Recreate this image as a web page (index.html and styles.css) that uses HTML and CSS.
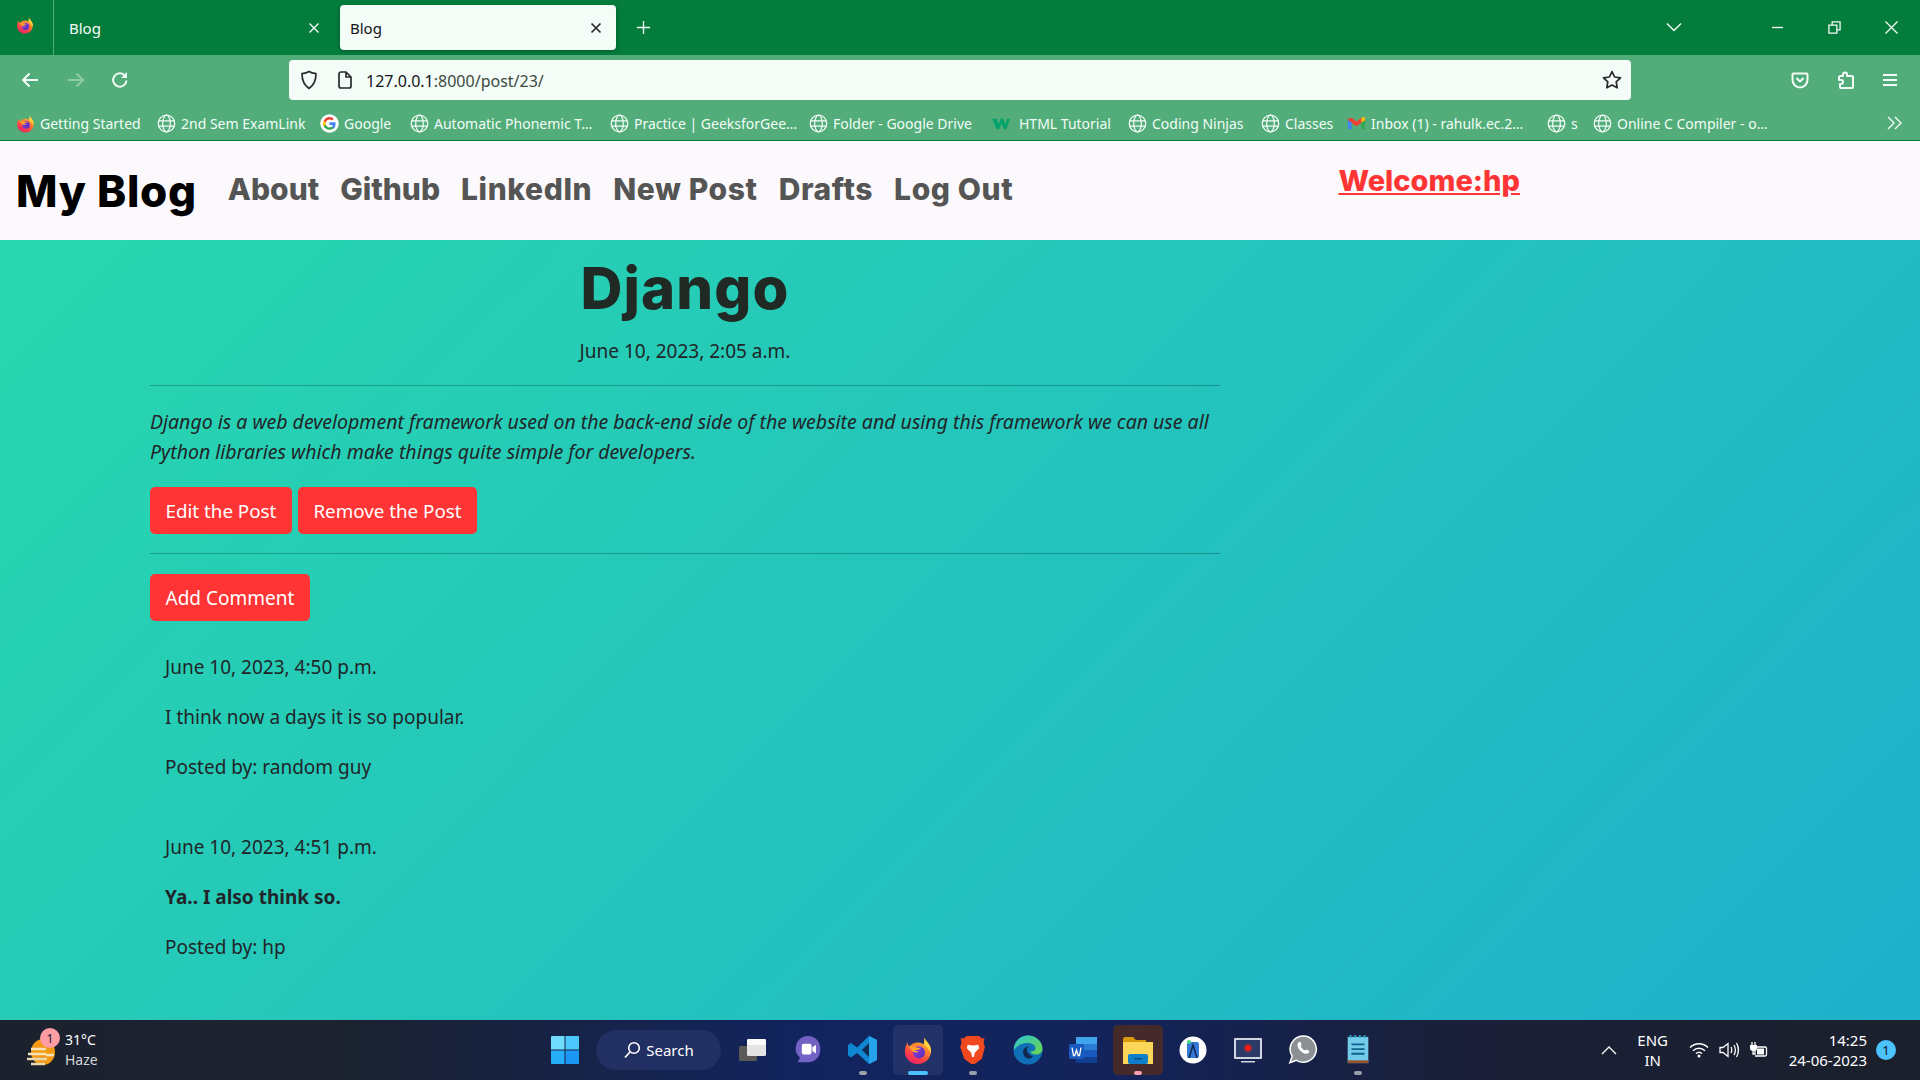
FILE: index.html
```html
<!DOCTYPE html>
<html lang="en">
<head>
<meta charset="utf-8">
<title>Blog</title>
<link rel="stylesheet" href="styles.css">
</head>
<body>
<svg class="defs" width="0" height="0" aria-hidden="true">
  <defs>
    <linearGradient id="ffg" x1="0.8" y1="0" x2="0.3" y2="1"><stop offset="0" stop-color="#ffc52e"/><stop offset="0.4" stop-color="#ff8a2b"/><stop offset="0.75" stop-color="#ff3f45"/><stop offset="1" stop-color="#e5216f"/></linearGradient>
    <linearGradient id="ffp" x1="0" y1="0" x2="1" y2="1"><stop offset="0" stop-color="#8a3fe0"/><stop offset="1" stop-color="#5b2db8"/></linearGradient>
    <linearGradient id="edgeg" x1="0" y1="0" x2="1" y2="1"><stop offset="0" stop-color="#2fc4d0"/><stop offset="1" stop-color="#6bd64a"/></linearGradient>
    <symbol id="globe" viewBox="0 0 20 20"><g fill="none" stroke="#f3fcf7" stroke-width="1.3"><circle cx="10" cy="10" r="8.7"/><ellipse cx="10" cy="10" rx="4" ry="8.7"/><path d="M1.500 7.200h17M1.500 12.800h17"/></g></symbol>
    <symbol id="firefox" viewBox="0 0 32 32">
      <path d="M22 1c.500 3 3 5 5 8 3.500 4.500 3.500 10 1.500 14-2.500 5-7 8-12.500 8C8 31 2 25 2 18c0-3 .800-7 3-10 0 2 .800 3.500 2 4.500C9 9.500 12 8 16 8c3 0 4.500 1 6 2 1.500-3 1-6 0-9z" fill="url(#ffg)"/>
      <path d="M22 1c.500 3 3 5 5 8 2.500 3.200 3.300 7 2.800 10.500C28 15 25 12.500 22 10c1.500-3 1-6 0-9z" fill="#ffd23f"/>
      <circle cx="17" cy="18.500" r="6.500" fill="url(#ffp)"/>
      <path d="M6.500 11.500c3 .500 5 1 7 1.500 2 .500 3.500 1 5.500 .500-1 2-4 2.500-6.500 2.500 1 1 2.500 1.500 4.500 1.500-1.500 1.500-5 1.500-7-.500-1.500-1.500-3-3.500-3.500-5.500z" fill="#ffa52e"/>
    </symbol>
  </defs>
</svg>
<header class="browser">
  <div class="tabstrip">
    <div class="ff-slot"><svg class="ic-18" aria-hidden="true"><use href="#firefox"/></svg></div>
    <div class="tab tab-idle"><span class="tab-title">Blog</span><svg class="ic-12" viewBox="0 0 12 12"><path class="st-light" d="M1.500 1.500l9 9M10.500 1.500l-9 9"/></svg></div>
    <div class="tab tab-active"><span class="tab-title">Blog</span><svg class="ic-12" viewBox="0 0 12 12"><path class="st-dark" d="M1.500 1.500l9 9M10.500 1.500l-9 9"/></svg></div>
    <svg class="new-tab" viewBox="0 0 16 16"><path class="st-light" d="M8 1v14M1 8h14"/></svg>
    <div class="win-ctrls">
      <svg class="tab-list" viewBox="0 0 16 10"><path class="st-light" d="M1 1.500l7 7 7-7"/></svg>
      <svg class="win-btn win-min" viewBox="0 0 14 14"><path class="st-light" d="M1 7h12"/></svg>
      <svg class="win-btn win-max" viewBox="0 0 14 14"><path class="st-light" d="M1 4.500h8.500v8.500H1zM4.500 4V1H13v8.500h-3"/></svg>
      <svg class="win-btn" viewBox="0 0 14 14"><path class="st-light" d="M.5.5l13 13M13.500.5l-13 13"/></svg>
    </div>
  </div>
  <div class="toolbar">
    <svg class="tb-ic back" viewBox="0 0 18 18"><path class="st-nav" d="M17 9H2M8.500 2.500L2 9l6.500 6.500"/></svg>
    <svg class="tb-ic fwd" viewBox="0 0 18 18"><path class="st-faded" d="M1 9h15M9.500 2.500L16 9l-6.500 6.500"/></svg>
    <svg class="tb-ic reload" viewBox="0 0 18 18"><path class="st-nav" d="M15.500 9.500A6.700 6.700 0 1 1 13.300 4"/><path class="fill-light" d="M16 1v6h-6z"/></svg>
    <div class="urlbar">
      <svg class="ic-18" viewBox="0 0 18 20"><path class="st-dark" d="M9 1.500c2 1.500 4.500 2 7 2.200 0 6.500-1.500 11-7 14.800C3.500 14.700 2 10.200 2 3.700c2.500-.2 5-.7 7-2.200z"/></svg>
      <svg class="ic-page" viewBox="0 0 14 18"><path class="st-dark" d="M1 3a2 2 0 0 1 2-2h5l5 5v9a2 2 0 0 1-2 2H3a2 2 0 0 1-2-2zM8 1v5h5"/></svg>
      <span class="url"><span class="url-host">127.0.0.1</span>:8000/post/23/</span>
      <svg class="star" viewBox="0 0 20 20"><path class="st-dark" d="M10 1.600l2.600 5.400 5.900.8-4.300 4.100 1 5.900-5.200-2.800-5.200 2.800 1-5.900-4.300-4.100 5.900-.8z"/></svg>
    </div>
    <svg class="tb-ic pocket" viewBox="0 0 18 18"><path class="st-nav" d="M2.500 2.500h13a1 1 0 0 1 1 1V9a7.500 7.500 0 0 1-15 0V3.500a1 1 0 0 1 1-1zM5.500 7L9 10.500 12.500 7"/></svg>
    <svg class="tb-ic puzzle" viewBox="0 0 18 18"><path class="st-nav" d="M8 1.500a2 2 0 0 1 2 2V5h5a1 1 0 0 1 1 1v10a1 1 0 0 1-1 1H4a1 1 0 0 1-1-1v-3h1a2 2 0 0 0 0-4H2V6.500A1.500 1.500 0 0 1 3.500 5H6V3.500a2 2 0 0 1 2-2z"/></svg>
    <svg class="tb-ic menu" viewBox="0 0 18 18"><path class="st-nav" d="M2 4h14M2 9h14M2 14h14"/></svg>
  </div>
  <nav class="bookmarks">
    <a class="bm bm-1"><svg class="ic-bm" aria-hidden="true"><use href="#firefox"/></svg>Getting Started</a>
    <a class="bm bm-2"><svg class="ic-bm"><use href="#globe"/></svg>2nd Sem ExamLink</a>
    <a class="bm bm-3"><svg class="ic-bm" viewBox="0 0 20 20"><circle cx="10" cy="10" r="9.800" fill="#fff"/><path d="M16.400 10.200c0-.5 0-1-.1-1.400H10v2.700h3.600c-.2.900-.6 1.600-1.300 2.100v1.700h2.200c1.200-1.200 1.900-3 1.900-5.100z" fill="#4285f4"/><path d="M10 16.700c1.800 0 3.300-.6 4.500-1.600l-2.200-1.700c-.6.400-1.400.7-2.300.7-1.800 0-3.200-1.200-3.800-2.800H3.900v1.700c1.100 2.200 3.400 3.700 6.100 3.700z" fill="#34a853"/><path d="M6.200 11.300c-.3-.8-.3-1.800 0-2.600V7H3.900a6.700 6.700 0 0 0 0 6z" fill="#fbbc05"/><path d="M10 5.900c1 0 1.900.3 2.600 1l2-1.900A6.700 6.700 0 0 0 3.900 7l2.300 1.700C6.800 7.100 8.200 5.900 10 5.900z" fill="#ea4335"/></svg>Google</a>
    <a class="bm bm-4"><svg class="ic-bm"><use href="#globe"/></svg>Automatic Phonemic T…</a>
    <a class="bm bm-5"><svg class="ic-bm"><use href="#globe"/></svg>Practice | GeeksforGee…</a>
    <a class="bm bm-6"><svg class="ic-bm"><use href="#globe"/></svg>Folder - Google Drive</a>
    <a class="bm bm-7"><svg class="ic-bm" viewBox="0 0 20 20"><path d="M0 5h5l2 6 2-6h3l2 6 2-6h3l-4 11h-2.500L10 10l-2.500 6H5z" fill="#04a36b"/></svg>HTML Tutorial</a>
    <a class="bm bm-8"><svg class="ic-bm"><use href="#globe"/></svg>Coding Ninjas</a>
    <a class="bm bm-9"><svg class="ic-bm"><use href="#globe"/></svg>Classes</a>
    <a class="bm bm-10"><svg class="ic-bm" viewBox="0 0 20 20"><path d="M1 5l4-1 5 4 5-4 4 1v2l-9 6-9-6z" fill="#ea4335"/><path d="M1 6.500l4 2.500v7H2a1 1 0 0 1-1-1z" fill="#4285f4"/><path d="M19 6.500L15 9v7h3a1 1 0 0 0 1-1z" fill="#34a853"/><path d="M15 4.500l2-1.200a1.300 1.300 0 0 1 2 1.200v2L15 9z" fill="#fbbc05"/></svg>Inbox (1) - rahulk.ec.2…</a>
    <a class="bm bm-11"><svg class="ic-bm"><use href="#globe"/></svg>s</a>
    <a class="bm bm-12"><svg class="ic-bm"><use href="#globe"/></svg>Online C Compiler - o…</a>
    <svg class="bm-more" viewBox="0 0 16 14"><path class="st-light" d="M1 1l6 6-6 6M8 1l6 6-6 6"/></svg>
  </nav>
</header>

<div class="navbar">
  <a class="brand">My Blog</a>
  <ul class="nav-links">
    <li class="nl-tight"><a>About</a></li>
    <li class="nl-tight"><a>Github</a></li>
    <li><a>LinkedIn</a></li>
    <li><a>New Post</a></li>
    <li><a>Drafts</a></li>
    <li><a>Log Out</a></li>
  </ul>
  <a class="welcome">Welcome:hp</a>
</div>

<main class="page">
  <article class="post">
    <h1 class="post-title">Django</h1>
    <p class="post-date">June 10, 2023, 2:05 a.m.</p>
    <hr class="rule">
    <p class="post-body"><em>Django is a web development framework used on the back-end side of the website and using this framework we can use all Python libraries which make things quite simple for developers.</em></p>
    <div class="actions">
      <a class="btn">Edit the Post</a>
      <a class="btn">Remove the Post</a>
    </div>
    <hr class="rule rule-2">
    <a class="btn">Add Comment</a>
    <section class="comment comment-first">
      <p>June 10, 2023, 4:50 p.m.</p>
      <p>I think now a days it is so popular.</p>
      <p>Posted by: random guy</p>
    </section>
    <section class="comment">
      <p>June 10, 2023, 4:51 p.m.</p>
      <p><strong>Ya.. I also think so.</strong></p>
      <p>Posted by: hp</p>
    </section>
  </article>
</main>

<footer class="taskbar">
  <div class="weather">
    <svg class="weather-ic" viewBox="0 0 30 30"><ellipse cx="17" cy="15" rx="12" ry="13" fill="#f59a12"/><path d="M1 22h20M5 27h14" stroke="#e8d8b0" stroke-width="2.500"/><path d="M5 12h15M20 18h8M2 17h18" stroke="#f6e3b8" stroke-width="2.500"/></svg>
    <span class="weather-badge">1</span>
    <div class="weather-text"><span>31°C</span><span class="haze">Haze</span></div>
  </div>
  <div class="tb-center">
    <div class="cell"><svg class="ic-30" viewBox="0 0 30 30"><path d="M1 2a1 1 0 0 1 1-1h12.500v13.500H1z" fill="#6fdcfd"/><path d="M15.500 1H28a1 1 0 0 1 1 1v12.500H15.500z" fill="#4cc8fc"/><path d="M1 15.500h13.500V29H2a1 1 0 0 1-1-1z" fill="#27aef8"/><path d="M15.500 15.500H29V28a1 1 0 0 1-1 1H15.500z" fill="#1b98f5"/></svg></div>
    <div class="search-pill"><svg class="ic-18" viewBox="0 0 18 18"><circle cx="11" cy="7" r="5.300" fill="none" stroke="#fff" stroke-width="1.600"/><path d="M7 11l-5 5.500" stroke="#fff" stroke-width="1.800"/></svg>Search</div>
    <div class="cell"><svg class="ic-30" viewBox="0 0 30 30"><rect x="1" y="11" width="18" height="15" rx="1.500" fill="#5b5b5b"/><rect x="9" y="4" width="19" height="17" rx="1.500" fill="#e4e4e4"/><rect x="9" y="4" width="19" height="6" rx="1.500" fill="#fafafa"/></svg></div>
    <div class="cell"><svg class="ic-30" viewBox="0 0 30 34"><path d="M15 1c8 0 14 6 14 15s-6 15-14 15H3l3-5c-3-3-5-6-5-10C1 7 7 1 15 1z" fill="#7162c4"/><rect x="8" y="10" width="11" height="12" rx="2" fill="#fff"/><path d="M20 14l4-3v10l-4-3z" fill="#fff"/></svg></div>
    <div class="cell"><svg class="ic-30" viewBox="0 0 30 30"><path d="M21 1l8 4v20l-8 4-12-11-6 4.500-3-2V10l3-2 6 4.500z" fill="#0f86d1"/><path d="M21 8l-7 7 7 7z" fill="#12294f"/><path d="M21 1l8 4v20l-8 4z" fill="#27a3ec"/></svg><span class="dot"></span></div>
    <div class="cell cell-boxed cell-active"><svg class="ic-30" aria-hidden="true"><use href="#firefox"/></svg><span class="dot dot-wide"></span></div>
    <div class="cell"><svg class="ic-30" viewBox="0 0 30 34"><path d="M8 1h14l3 3 3-.5-1 5 1.500 5L25 27l-8 6h-4l-8-6L.5 13.500 2 8.500l-1-5L4 4z" fill="#f0481f"/><path d="M9 11l5 1h2l5-1 1 4-5 5-1 5h-2l-1-5-5-5z" fill="#fff"/></svg><span class="dot"></span></div>
    <div class="cell"><svg class="ic-30" viewBox="0 0 30 30"><circle cx="15" cy="15" r="14.500" fill="#0f70b7"/><path d="M1 12C3 4 9 .5 15 .5c8 0 14.500 6 14.500 13 0 4-3 6-7 6-3 0-5-1-5-3 3 0 5-1 5-3.500S19 8 15 8C8 8 4 11 1 15z" fill="url(#edgeg)"/><path d="M10 17c0-4 4-6 7-5.500-5 0-4 8 3 10-3 4-10 2-10-4.500z" fill="#12294f"/></svg></div>
    <div class="cell"><svg class="ic-30" viewBox="0 0 30 30"><rect x="8" y="2" width="21" height="26" rx="1.500" fill="#2b7cd3"/><rect x="8" y="2" width="21" height="7" fill="#41a5ee"/><rect x="8" y="15" width="21" height="7" fill="#185abd"/><rect x="8" y="22" width="21" height="6" fill="#103f91"/><rect x="1" y="9" width="15" height="15" rx="1.500" fill="#185abd"/><path d="M4 12.500l1.500 8h1.300L8.500 15l1.700 5.500h1.300l1.500-8" stroke="#fff" stroke-width="1.300" fill="none"/></svg></div>
    <div class="cell cell-boxed cell-explorer"><svg class="ic-32" viewBox="0 0 32 32"><path d="M1 5a2 2 0 0 1 2-2h8l3 3h10v4H1z" fill="#d99a08"/><rect x="1" y="8" width="30" height="22" fill="#fcd659"/><rect x="6" y="20" width="20" height="10" rx="2" fill="#0f7fc9"/><rect x="12" y="24" width="8" height="1.500" fill="#0b4f85"/></svg><span class="dot dot-pink"></span></div>
    <div class="cell"><svg class="ic-28" viewBox="0 0 28 28"><circle cx="14" cy="14" r="13.500" fill="#fff"/><rect x="8" y="6" width="12" height="16" rx="2" fill="#3479d8"/><path d="M10 22l4-13 4 13" stroke="#12294f" stroke-width="1.500" fill="none"/><circle cx="10" cy="6" r="2" fill="#3ddc84"/></svg></div>
    <div class="cell"><svg class="ic-30" viewBox="0 0 30 30"><rect x="1" y="3" width="28" height="21" rx="1" fill="#cfd6e2"/><rect x="3" y="5" width="24" height="17" fill="#2b3a66"/><circle cx="15" cy="13" r="3.500" fill="#f01e1e"/><rect x="8" y="26" width="14" height="1.500" fill="#cfd6e2"/></svg></div>
    <div class="cell"><svg class="ic-30" viewBox="0 0 30 32"><path d="M15 1a14 14 0 1 1-7 26l-7 2.500 2.500-7A14 14 0 0 1 15 1z" fill="#8c8f93" stroke="#fff" stroke-width="1.600"/><path d="M10 8c1-1 2-1 2.500 0l1 2.500-1 1.500c1 2 2.500 3.500 4.500 4.500l1.500-1 2.500 1c1 .5 1 1.500 0 2.500-2 2-5 1-8-1.500S8 11 10 8z" fill="#fff"/></svg></div>
    <div class="cell"><svg class="ic-30" viewBox="0 0 24 32"><rect x="1" y="2" width="22" height="28" fill="#71cbe9"/><rect x="1" y="27" width="22" height="3" fill="#96542c"/><path d="M5 10h14M5 15h14M5 20h14" stroke="#12608c" stroke-width="2"/><path d="M4 0v3M9 0v3M14 0v3M19 0v3" stroke="#2aa1c9" stroke-width="2"/></svg><span class="dot"></span></div>
  </div>
  <div class="tray">
    <svg class="tray-caret" viewBox="0 0 16 10"><path class="st-light" d="M1 9l7-7 7 7"/></svg>
    <div class="lang"><span>ENG</span><span>IN</span></div>
    <svg class="tray-ic" viewBox="0 0 20 16"><g fill="none" stroke="#fff" stroke-width="1.500"><path d="M1 5.500c5-5 13-5 18 0M4 8.700c3.500-3.300 8.500-3.300 12 0M7 11.500c1.700-1.500 4.300-1.500 6 0"/></g><circle cx="10" cy="14" r="1.500" fill="#fff"/></svg>
    <svg class="tray-ic" viewBox="0 0 20 16"><path d="M1 5.500h3l5-4v13l-5-4H1z" fill="none" stroke="#fff" stroke-width="1.300"/><path d="M12 5c1 2 1 4 0 6M15 3c1.700 3 1.700 7 0 10M17.500 1c2.500 4 2.500 10 0 14" fill="none" stroke="#fff" stroke-width="1.300"/></svg>
    <svg class="tray-ic" viewBox="0 0 20 16"><path d="M3 0v3M6 0v3" stroke="#fff" stroke-width="1.300"/><path d="M1 3h7v3a3 3 0 0 1-3 3H4a3 3 0 0 1-3-3z" fill="#fff"/><path d="M4 9v3h2V5h10a1.500 1.500 0 0 1 1.500 1.500v6A1.500 1.500 0 0 1 16 14H6" fill="none" stroke="#fff" stroke-width="1.300"/><rect x="8" y="6.500" width="7" height="6" fill="#fff"/></svg>
    <div class="clock"><span>14:25</span><span>24-06-2023</span></div>
    <span class="notif">1</span>
  </div>
</footer>
</body>
</html>
```

FILE: styles.css
```css
* { box-sizing: border-box; }
html, body { height: 100%; }
body {
  margin: 0;
  width: 1920px;
  height: 1080px;
  overflow: hidden;
  display: flex;
  flex-direction: column;
  font-family: "Noto Sans", "Open Sans", sans-serif;
  color: #212529;
}
a { color: inherit; text-decoration: none; }
p { margin: 0; }
svg { flex: none; display: block; }
.defs { position: absolute; }

.st-light { fill: none; stroke: #f3fcf7; stroke-width: 1.4; }
.st-dark { fill: none; stroke: #2a2a2e; stroke-width: 1.7; stroke-linejoin: round; }
.st-nav { fill: none; stroke: #f3fcf7; stroke-width: 2; stroke-linejoin: round; }
.st-faded { fill: none; stroke: #8fcaa9; stroke-width: 2; }
.fill-light { fill: #f3fcf7; }

.ic-12 { width: 12px; height: 12px; }
.ic-18 { width: 18px; height: 20px; }
.ic-page { width: 14px; height: 18px; margin-left: 20px; }
.ic-bm { width: 19px; height: 19px; margin-right: 5px; }
.ic-28 { width: 28px; height: 28px; }
.ic-30 { width: 30px; height: 30px; }
.ic-32 { width: 32px; height: 32px; }

/* Browser chrome */
.browser { flex: none; height: 141px; background: #52ad7a; border-bottom: 1px solid #047c3c; }
.tabstrip { height: 55px; display: flex; align-items: center; background: #047c3c; color: #f3fcf7; }
.ff-slot { width: 54px; height: 55px; display: flex; align-items: center; padding-left: 16px; border-right: 1px solid #52ad7a; padding-bottom: 6px; }
.tab { display: flex; align-items: center; justify-content: space-between; height: 45px; border-radius: 4px; }
.tab-idle { width: 286px; padding: 0 20px 0 15px; }
.tab-active { width: 276px; padding: 0 14px 0 10px; background: #f3fcf7; color: #15141a; box-shadow: 0 1px 4px rgba(0,0,0,.3); }
.tab-title { font-size: 15px; }
.new-tab { width: 15px; height: 15px; margin-left: 20px; }
.win-ctrls { margin-left: auto; display: flex; align-items: center; padding-right: 22px; }
.tab-list { width: 16px; height: 10px; margin-right: 89px; margin-bottom: 2px; }
.win-btn { width: 13px; height: 13px; }
.win-min { margin-right: 44px; }
.win-max { margin-right: 44px; }

.toolbar { height: 45px; display: flex; align-items: center; padding: 5px 0 0 21px; }
.tb-ic { width: 18px; height: 18px; }
.fwd { margin-left: 28px; }
.reload { margin-left: 26px; }
.urlbar { width: 1342px; height: 40px; margin-left: 160px; background: #f3fcf7; border-radius: 4px; display: flex; align-items: center; padding: 0 9px 0 11px; color: #3b4a42; font-size: 16px; }
.url { margin-left: 14px; margin-top: 2px; }
.url-host { color: #15141a; }
.star { width: 20px; height: 20px; margin-left: auto; }
.pocket { margin-left: 160px; }
.puzzle { margin-left: 28px; }
.menu { margin-left: 26px; }

.bookmarks { height: 40px; display: flex; align-items: center; padding: 6px 0 0 16px; font-size: 14px; color: #f3fcf7; white-space: nowrap; }
.bm { display: flex; align-items: center; flex: none; }
.bm-1 { width: 141px; }
.bm-2 { width: 163px; }
.bm-3 { width: 90px; }
.bm-4 { width: 200px; }
.bm-5 { width: 199px; }
.bm-6 { width: 183px; }
.bm-7 { width: 136px; }
.bm-7 .ic-bm { margin-right: 8px; }
.bm-8 { width: 133px; }
.bm-9 { width: 86px; }
.bm-10 { width: 200px; }
.bm-11 { width: 46px; }
.bm-more { width: 16px; height: 14px; margin-left: auto; margin-right: 17px; }

/* Site navbar */
.navbar { flex: none; height: 99px; background: #fbf9fb; display: flex; align-items: flex-start; padding: 0 400px 0 16px; font-family: Inter, "Noto Sans", sans-serif; font-weight: 800; }
.brand { font-size: 44px; line-height: 48px; color: #000; margin-top: 26px; letter-spacing: .7px; }
.nav-links { list-style: none; margin: 28px 0 0 31px; padding: 0; display: flex; gap: 21px; font-size: 30px; line-height: 40px; letter-spacing: .6px; color: #555; }
.nl-tight { letter-spacing: 0; }
.welcome { margin-left: auto; margin-top: 20px; font-size: 29px; line-height: 40px; color: #ff3535; text-decoration: underline; }

/* Page */
.page { flex: 1; min-height: 0; background: linear-gradient(135deg, #28d7ae 0%, #1fb0cc 100%); padding: 0 0 0 150px; }
.post { width: 1070px; font-size: 19px; line-height: 30px; }
.post-title { margin: 14px 0 0; text-align: center; font-family: Inter, "Noto Sans", sans-serif; font-weight: 800; font-size: 58px; line-height: 68px; letter-spacing: 1.1px; color: #212925; }
.post-date { margin-top: 14px; text-align: center; }
.rule { margin: 19px 0 0; border: 0; border-top: 1px solid rgba(0,0,0,.25); height: 0; }
.post-body { margin-top: 21px; font-size: 19.5px; }
.actions { display: flex; gap: 6px; margin-top: 20px; font-size: 18.8px; }
.rule-2 { margin-top: 19px; margin-bottom: 20px; }
.btn { display: inline-block; height: 47px; padding: 9px 15.5px 0; border-radius: 5px; background: #ff3535; color: #fff; line-height: 30px; }
.comment { padding: 0 15px; }
.comment p { margin-bottom: 20px; }
.comment-first { margin-top: 31px; }
.comment + .comment { margin-top: 50px; }

/* Windows taskbar */
.taskbar { flex: none; height: 60px; display: flex; align-items: center; color: #fff; font-size: 14px; background: linear-gradient(90deg, #1c212e 0%, #1b2230 18%, #12245f 42%, #13235a 58%, #1a2038 76%, #1b202c 100%); }
.weather { position: relative; width: 537px; height: 60px; display: flex; align-items: center; padding-left: 26px; flex: none; }
.weather-ic { width: 30px; height: 30px; margin-top: 3px; }
.weather-badge { position: absolute; left: 40px; top: 8px; width: 20px; height: 20px; border-radius: 50%; background: #ff9da5; color: #1c212e; font-size: 13px; line-height: 20px; text-align: center; }
.weather-text { display: flex; flex-direction: column; margin-left: 9px; line-height: 20px; }
.haze { color: #d5d7da; }
.tb-center { display: flex; align-items: center; height: 60px; flex: none; }
.cell { position: relative; width: 55px; height: 50px; display: flex; align-items: center; justify-content: center; border-radius: 5px; }
.cell-boxed { width: 50px; margin: 0 2.5px; }
.cell-active { background: rgba(255,255,255,.07); }
.cell-explorer { background: #452a2c; }
.search-pill { width: 125px; height: 40px; margin: 0 4px; border-radius: 20px; background: #222f63; display: flex; align-items: center; justify-content: center; gap: 5px; font-size: 15px; }
.dot { position: absolute; left: 50%; bottom: 0; width: 8px; height: 4px; margin-left: -4px; border-radius: 2px; background: #9aa0ab; }
.dot-wide { width: 20px; margin-left: -10px; background: #4cc2ff; }
.dot-pink { background: #f7a1ac; }
.tray { margin-left: auto; display: flex; align-items: center; height: 60px; padding-right: 24px; font-size: 15px; }
.tray-caret { width: 16px; height: 10px; }
.lang { display: flex; flex-direction: column; align-items: center; margin-left: 11px; width: 50px; line-height: 20px; }
.tray-ic { width: 20px; height: 16px; margin-left: 10px; }
.lang + .tray-ic { margin-left: 11px; }
.clock { display: flex; flex-direction: column; align-items: flex-end; margin-left: 20px; line-height: 20px; font-size: 15px; }
.notif { width: 20px; height: 20px; margin-left: 9px; border-radius: 50%; background: #4cc2ff; color: #10131c; font-size: 13px; line-height: 20px; text-align: center; }
```
